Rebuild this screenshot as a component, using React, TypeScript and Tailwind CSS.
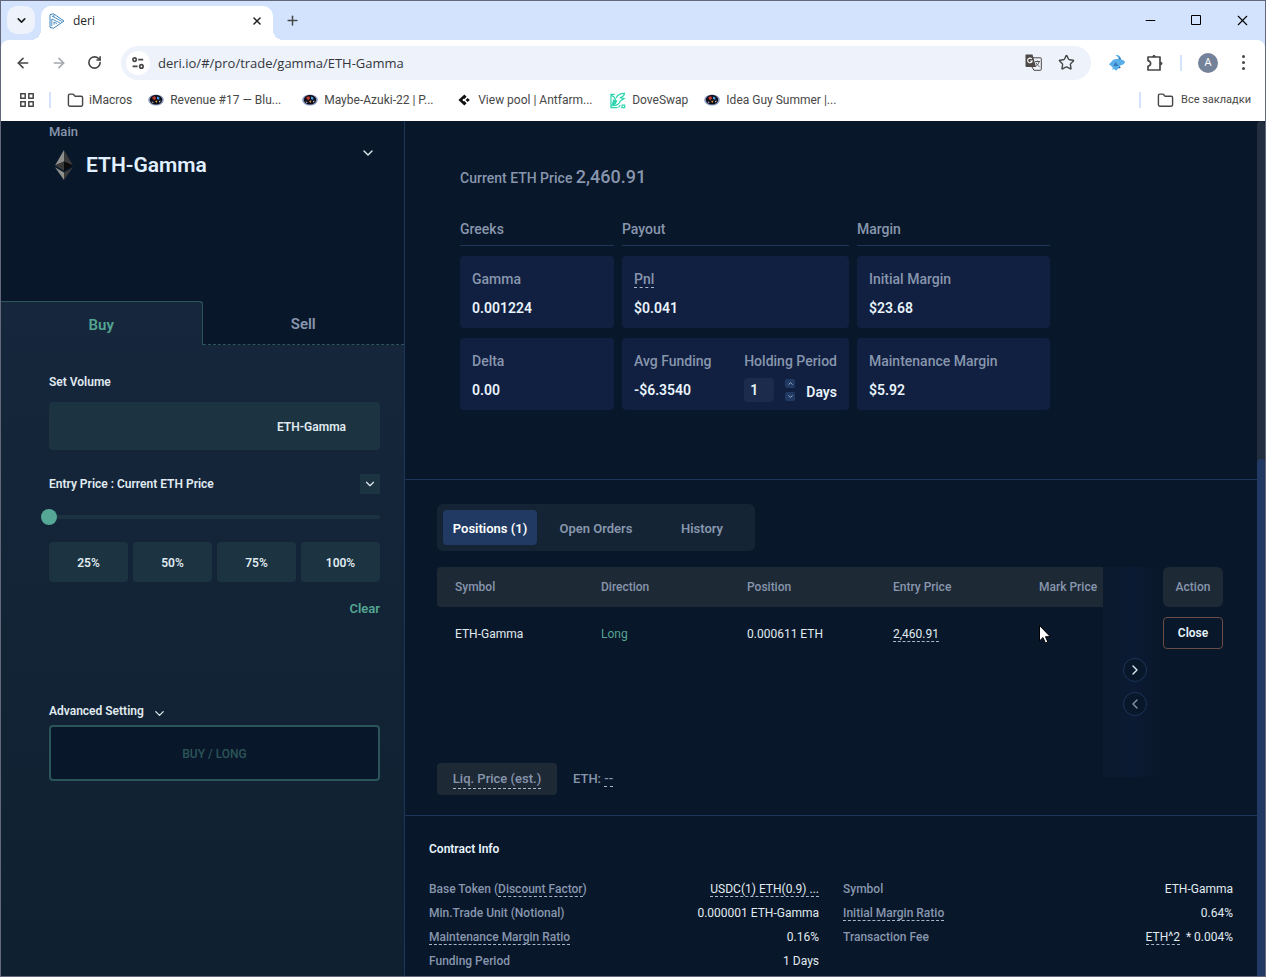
import React from 'react';
import { ArrowLeft, ArrowRight, ChevronDown, ChevronLeft, ChevronRight, ChevronUp, Folder, Minus, Plus, RotateCw, Star, X } from 'lucide-react';

const DeriLogo = () => (
  <svg width="16" height="16" viewBox="0 0 16 16" fill="none" stroke="#3f86bd" strokeLinejoin="round">
    <path d="M1 1.5 L4.5 0.8 L15 8 L4.5 15.2 L1 14.5 Z" />
    <path d="M2.8 3 L13 8.4 M2.8 13 V6 L10.8 9.8 M5 11.6 V9 L8 10.6" strokeWidth="0.9" />
    <path d="M4.6 1.5 L5 4" strokeWidth="0.9" />
  </svg>
);

const TuneIcon = () => (
  <svg width="14" height="14" viewBox="0 0 14 14" fill="none" stroke="#474747" strokeWidth="1.7">
    <circle cx="3.6" cy="3.6" r="1.7" />
    <path d="M7.2 3.6 H12.2 M1.6 10.4 H6.6" />
    <circle cx="10.4" cy="10.4" r="1.7" />
  </svg>
);

const AppsIcon = () => (
  <svg width="14" height="14" viewBox="0 0 14 14" fill="none" stroke="#474747" strokeWidth="1.5">
    <path d="M0.8 0.8h4.4v4.4h-4.4z M8.8 0.8h4.4v4.4h-4.4z M0.8 8.8h4.4v4.4h-4.4z M8.8 8.8h4.4v4.4h-4.4z" />
  </svg>
);

const FolderIcon = () => <Folder size={17} strokeWidth={2} className="-mr-px" />;

const PlanetIcon = () => (
  <svg width="16" height="12" viewBox="0 0 16 12">
    <ellipse cx="8" cy="6" rx="7.8" ry="5.6" fill="#8b9ac0" />
    <ellipse cx="8" cy="5.8" rx="6.2" ry="4.8" fill="#0c0d18" />
    <path d="M4 3.5 L7 2 L8.2 4.6 L6 6.5 Z" fill="#c0392f" />
    <path d="M9 2.6 L11.4 3.4 L11.2 5.8 L9 5 Z" fill="#4aa3e8" />
    <path d="M7 7 L9.5 6.5 L8.5 9 Z" fill="#e8a03c" />
    <path d="M3.6 7.5 L5.5 8 L5 9.2 Z M11 7 L12.8 6.5 L11.5 8.7 Z" fill="#d8e4f4" />
  </svg>
);

const AntfarmIcon = () => (
  <svg width="16" height="12" viewBox="-2 0 16 12" fill="#111">
    <path d="M6.4 0.6 L8.6 2.8 L6.4 5 L5 6 L6.4 7 L8.6 9.2 L6.4 11.4 L4.2 9.4 L0.4 6 L4.2 2.6 Z" />
    <path d="M9.6 4 L11.8 6 L9.6 8 L7.6 6 Z" />
    <circle cx="5.9" cy="6" r="1.3" fill="#fff" />
  </svg>
);

const DoveIcon = () => (
  <svg width="16" height="17" viewBox="0 0 17 17" fill="none" stroke="#2fd6b0" strokeWidth="1.3">
    <path d="M5 2 H1 V16 H8 M1.5 3 L4.5 5 L6 8 M6.5 6 C8 2 11 1 15.5 1 C15 4 13 5 10.5 5.5 L15 6.5 L11 9 C10 12 7 14 3 14" />
    <path d="M9 15.8 L11 13.6 M13 13.4 H15.6 V16 H12.6 Z" />
    <path d="M4 8 L7 9 L5.5 12 L2 14 Z" fill="#2fd6b0" />
  </svg>
);

const TranslateIcon = () => (
  <svg width="17" height="17" viewBox="0 0 17 17">
    <path d="M1 0.5 H7.5 L11 13 H1.8 Q0.5 13 0.5 11.8 V1 Z" fill="#4c4947" />
    <path d="M7.8 3.8 H15.6 Q16.3 3.8 16.3 4.5 V15.4 Q16.3 16.3 15.4 16.3 H9 L7 13" fill="none" stroke="#4c4947" />
    <path d="M6.8 5 A2.3 2.3 0 1 0 7.2 7 H5.2" fill="none" stroke="#fff" strokeWidth="1.1" />
    <path d="M10 7.5 H15 M12.4 6.5 V7.5 M14.2 7.5 C13.6 10 12 11.5 10.6 12.4 M11 8.6 C11.8 10.6 13 11.6 14.6 12.6" fill="none" stroke="#4c4947" strokeWidth="0.9" />
  </svg>
);

const FishIcon = () => (
  <svg width="18" height="18" viewBox="0 0 18 18">
    <path d="M7.4 1.2 C11 0.6 12.8 2.6 13 5.4 L15.5 6.2 L17.2 8.2 L15.2 10.4 L12.2 11.6 L12 13.8 L9.5 15 L8.4 16.8 L6 15 L4.4 16 L4.8 13.4 L1 10.2 L3.6 7.4 C5.5 5 8 4.6 10.6 5.2 C10.4 3.4 9.4 2.2 7.4 1.2 Z" fill="#58aee8" />
    <path d="M9.6 1.4 L12.8 5 L11.8 6 C11.6 4 11 2.8 9.6 1.4 Z M10.5 13 L13 13.2 L11.5 14.6 Z" fill="#1b4b97" />
    <path d="M5.5 12 L7.5 8 L10.5 12 Z" fill="#3577b8" />
  </svg>
);

const PuzzleIcon = () => (
  <svg width="18" height="18" viewBox="0 0 18 18" fill="none" stroke="#474747" strokeWidth="1.7" strokeLinejoin="round">
    <path d="M2 3 H14 V16 H2 V12.4 Q4.6 11.6 4.6 9.5 Q4.6 7.4 2 6.6 Z" />
    <path d="M6.6 2.6 Q6.8 1.4 8 1.4 Q9.2 1.4 9.4 2.6 Z M14.6 8 Q16 8.2 16 9.5 Q16 10.8 14.6 11 Z" fill="#474747" strokeWidth="1" />
  </svg>
);

const EthIcon = () => (
  <svg width="20" height="30" viewBox="0 0 20 30">
    <path d="M10 0 L1 15.5 L10 11.5 Z" fill="#8f8f8b" />
    <path d="M10 0 L19 15.5 L10 11.5 Z" fill="#3a3a3a" />
    <path d="M10 11.5 L1 15.5 L10 20.8 Z" fill="#3a3a3a" />
    <path d="M10 11.5 L19 15.5 L10 20.8 Z" fill="#0b0b0d" />
    <path d="M1 17.3 L10 30 V22.6 Z" fill="#8f8f8b" />
    <path d="M19 17.3 L10 30 V22.6 Z" fill="#3a3a3a" />
  </svg>
);

const CursorIcon = () => (
  <svg width="12" height="19" viewBox="0 0 12 19" className="absolute left-[18px] top-[18px]">
    <path d="M0.5 0.5 V16 L4 12.6 L6.4 18 L8.8 17 L6.5 11.7 H11.3 Z" fill="#fff" stroke="#000" />
  </svg>
);

const bookmarks = [
  { label: 'iMacros', icon: <FolderIcon /> },
  { label: 'Revenue #17 — Blu...', icon: <PlanetIcon />, cut: true },
  { label: 'Maybe-Azuki-22 | P...', icon: <PlanetIcon />, cut: true },
  { label: 'View pool | Antfarm...', icon: <AntfarmIcon />, cut: true },
  { label: 'DoveSwap', icon: <DoveIcon /> },
  { label: 'Idea Guy Summer |...', icon: <PlanetIcon />, cut: true },
];

const dashed = 'border-b border-dashed border-[#aab8c8]';

const BrowserBar: React.FC = () => (
  <header className="shrink-0 bg-[#d3e3fd] font-['Open_Sans',sans-serif] text-[#474747]">
    {/* Tab strip */}
    <div className="flex h-[39px] items-start">
      <button aria-label="Search tabs" className="mt-[5px] ml-1.5 flex size-7 items-center justify-center rounded-[10px] bg-[#edf2fb] text-[#1f1f1f]">
        <ChevronDown size={13} strokeWidth={3} />
      </button>
      <div className="relative mt-[5px] ml-1.5 flex h-[34px] w-[232px] items-center rounded-t-[10px] bg-white px-2 pb-1 text-xs text-[#1f1f1f]">
        <span className="absolute bottom-0 -left-2.5 size-2.5 bg-[radial-gradient(circle_at_0_0,transparent_10px,white_10px)]" />
        <span className="absolute -right-2.5 bottom-0 size-2.5 bg-[radial-gradient(circle_at_100%_0,transparent_10px,white_10px)]" />
        <DeriLogo />
        <span className="ml-2 flex-1">deri</span>
        <button aria-label="Close tab" className="flex size-4 items-center justify-center">
          <X size={12} strokeWidth={3} />
        </button>
      </div>
      <button aria-label="New tab" className="mt-3 ml-3 text-[#474747]">
        <Plus size={15} strokeWidth={2.4} />
      </button>
      <div className="ml-auto flex h-[38px] items-center text-black">
        <button aria-label="Minimize" className="flex w-[46px] justify-center"><Minus size={15} strokeWidth={1.6} /></button>
        <button aria-label="Maximize" className="flex w-[46px] justify-center">
          <svg width="10" height="10" viewBox="0 0 10 10" fill="none" stroke="currentColor"><path d="M0.5 0.5h9v9h-9z" /></svg>
        </button>
        <button aria-label="Close" className="flex w-[46px] justify-center"><X size={17} strokeWidth={1.6} /></button>
      </div>
    </div>

    {/* Address bar */}
    <div className="flex h-[45px] items-center rounded-t-lg bg-white pr-5 pl-3.5">
      <div className="flex w-[106px] gap-5">
        <button aria-label="Back"><ArrowLeft size={16} strokeWidth={2.4} /></button>
        <button aria-label="Forward" className="text-[#a3a8ae]"><ArrowRight size={16} strokeWidth={2.4} /></button>
        <button aria-label="Reload"><RotateCw size={15} strokeWidth={2.6} /></button>
      </div>
      <div className="flex h-[34px] flex-1 items-center rounded-full bg-[#edf2fb] pr-4 pl-[5px]">
        <span className="flex size-6 items-center justify-center rounded-full bg-white"><TuneIcon /></span>
        <input aria-label="Address" defaultValue="deri.io/#/pro/trade/gamma/ETH-Gamma" className="ml-2 min-w-0 flex-1 bg-transparent pt-0.5 text-[13px] text-[#33363b] outline-none" />
        <button aria-label="Translate"><TranslateIcon /></button>
        <button aria-label="Bookmark" className="ml-4"><Star size={17} strokeWidth={2} /></button>
      </div>
      <div className="ml-[17px] flex items-center">
        <FishIcon />
        <button aria-label="Extensions" className="ml-5"><PuzzleIcon /></button>
        <span className="mx-4 h-4 w-0.5 bg-[#d3e3fd]" />
        <span className="flex size-5 items-center justify-center rounded-full bg-[#748299] text-[11px] text-white">A</span>
        <button aria-label="Menu" className="ml-6 flex flex-col gap-[3px]">
          <i className="size-[3px] rounded-full bg-[#474747]" />
          <i className="size-[3px] rounded-full bg-[#474747]" />
          <i className="size-[3px] rounded-full bg-[#474747]" />
        </button>
      </div>
    </div>

    {/* Bookmarks */}
    <div className="flex h-9 items-center bg-white pr-3.5 pb-1.5 pl-[19px] font-['Roboto',sans-serif] text-xs">
      <AppsIcon />
      <span className="mr-4 ml-[15px] h-4 w-0.5 bg-[#d3e3fd]" />
      <nav className="flex items-center gap-4">
        {bookmarks.map((b) => (
          <a key={b.label} href="#" className="flex items-center gap-1.5 whitespace-nowrap">
            {b.icon}
            <span className={b.cut ? 'w-[116px]' : ''}>{b.label}</span>
          </a>
        ))}
      </nav>
      <span className="mr-4 ml-auto h-4 w-0.5 bg-[#d3e3fd]" />
      <a href="#" className="flex items-center gap-2 text-[11px] whitespace-nowrap">
        <FolderIcon />
        Все закладки
      </a>
    </div>
  </header>
);

const TradePanel: React.FC = () => (
  <aside className="flex w-[404px] shrink-0 flex-col border-r border-[#1c3558] text-[#e0ebf0]">
    <div className="flex h-[180px] justify-between pr-7 pl-12">
      <div>
        <p className="text-[13px] leading-[22px] font-medium text-[#8796ad]">Main</p>
        <div className="mt-1.5 flex items-center gap-3 pl-[5px]">
          <EthIcon />
          <h1 className="text-[21px] leading-8 font-semibold text-[#e0f0ff]">ETH-Gamma</h1>
        </div>
      </div>
      <button aria-label="Choose market" className="mt-6 h-4"><ChevronDown size={16} /></button>
    </div>

    {/* Buy / Sell */}
    <div className="flex flex-1 flex-col bg-linear-to-b from-[#16273d] to-[#0f2030]">
      <div className="grid h-11 grid-cols-2 text-[15px] font-semibold">
        <button className="rounded-tr border-t border-r border-[#2b5558] pt-1 text-[#53a592]">Buy</button>
        <button className="border-b border-dashed border-[#2b5558] bg-[#09172a] pt-1 text-[#8796ad]">Sell</button>
      </div>

      <div className="flex flex-col pr-6 pl-12 text-xs font-semibold">
        <label htmlFor="volume" className="mt-[26px] leading-[22px]">Set Volume</label>
        <div className="mt-[9px] flex h-12 items-center rounded-sm bg-[#1c3342] pt-0.5 pr-[34px] pl-4">
          <input id="volume" className="min-w-0 flex-1 bg-transparent outline-none" />
          <span>ETH-Gamma</span>
        </div>

        <div className="mt-[23px] flex h-[22px] items-center justify-between">
          <span>Entry Price : Current ETH Price</span>
          <button aria-label="Entry price type" className="flex size-5 items-center justify-center bg-[#1c3342]"><ChevronDown size={14} /></button>
        </div>

        <div className="mt-5 flex h-1 items-center rounded-full bg-[#1c3342]">
          <input
            type="range"
            aria-label="Volume share"
            defaultValue={0}
            className="-mx-2 h-4 w-[calc(100%+16px)] max-w-none shrink-0 appearance-none bg-transparent [&::-webkit-slider-thumb]:size-4 [&::-webkit-slider-thumb]:appearance-none [&::-webkit-slider-thumb]:rounded-full [&::-webkit-slider-thumb]:bg-[#55a896]"
          />
        </div>

        <div className="mt-[23px] grid grid-cols-4 gap-[5px]">
          {['25%', '50%', '75%', '100%'].map((p) => (
            <button key={p} className="h-10 rounded-sm bg-[#1c3342] pt-0.5">{p}</button>
          ))}
        </div>
        <button className="mt-4 self-end text-[13px] leading-[22px] text-[#53a592]">Clear</button>

        <button className="mt-20 flex items-center gap-2 self-start leading-[22px]">
          Advanced Setting
          <ChevronDown size={15} className="mt-1" />
        </button>
        <button disabled className="mt-[3px] h-14 rounded-sm border-2 border-[#2b5558] bg-[#09172a] pt-0.5 font-medium text-[#2b5558]">BUY / LONG</button>
      </div>
    </div>
  </aside>
);

const Stat: React.FC<{ label: string; value: string; underline?: boolean }> = ({ label, value, underline }) => (
  <div className="flex h-[72px] flex-col items-start gap-[7px] rounded-sm bg-[#111f40] px-3 pt-3 leading-[22px]">
    <span>{underline ? <span className={dashed}>{label}</span> : label}</span>
    <span className="font-semibold text-[#e8f4fc]">{value}</span>
  </div>
);

const Market: React.FC = () => (
  <section className="flex h-[359px] flex-col border-b border-[#1c3558] px-[55px] pt-[42px] text-sm font-medium text-[#8796ad]">
    <p className="leading-7">
      Current ETH Price <span className="text-lg">2,460.91</span>
    </p>
    <div className="mt-[26px] grid max-w-[590px] grid-cols-[154fr_227fr_193fr] gap-x-2 gap-y-2.5">
      <h2 className="border-b border-[#1c3558] pb-[5px] leading-[22px]">Greeks</h2>
      <h2 className="border-b border-[#1c3558] pb-[5px] leading-[22px]">Payout</h2>
      <h2 className="border-b border-[#1c3558] pb-[5px] leading-[22px]">Margin</h2>
      <Stat label="Gamma" value="0.001224" />
      <Stat label="Pnl" value="$0.041" underline />
      <Stat label="Initial Margin" value="$23.68" />
      <Stat label="Delta" value="0.00" />
      <div className="flex justify-between rounded-sm bg-[#111f40] px-3 pt-3 leading-[22px]">
        <div className="flex flex-col gap-[7px]">
          <span>Avg Funding</span>
          <span className="font-semibold text-[#e8f4fc]">-$6.3540</span>
        </div>
        <div className="flex flex-col gap-[5px]">
          <label htmlFor="holding">Holding Period</label>
          <div className="flex items-center justify-between font-semibold text-[#e8f4fc]">
            <input id="holding" defaultValue="1" className="h-6 w-[30px] rounded-sm bg-[#1c2b4b] pl-1.5 outline-none" />
            <div className="flex flex-col gap-1">
              <button aria-label="More days" className="flex h-[9px] w-2.5 items-center justify-center rounded-xs bg-[#203a63]"><ChevronUp size={7} /></button>
              <button aria-label="Fewer days" className="flex h-[9px] w-2.5 items-center justify-center rounded-xs bg-[#203a63]"><ChevronDown size={7} /></button>
            </div>
            <span className="pt-1">Days</span>
          </div>
        </div>
      </div>
      <Stat label="Maintenance Margin" value="$5.92" />
    </div>
  </section>
);

const Positions: React.FC = () => (
  <section className="flex h-[336px] flex-col border-b border-[#1c3558] pt-6 pr-[34px] pl-8 text-[13px] font-medium text-[#8796ad]">
    <div className="flex w-[318px] rounded-md bg-[#142434] p-1.5 font-semibold">
      <button className="h-[35px] w-[94px] rounded-sm bg-[#203a63] pt-0.5 whitespace-nowrap text-white">Positions (1)</button>
      <button className="h-[35px] flex-1 pt-0.5 pl-0.5">Open Orders</button>
      <button className="h-[35px] w-24 pt-0.5 pl-0.5">History</button>
    </div>

    <div className="mt-4 flex h-[210px] shrink-0 text-xs">
      <div className="min-w-0 flex-1 overflow-hidden">
        <table className="w-[730px] table-fixed text-left">
          <thead>
            <tr className="h-10 bg-[#1e2936]">
              <th className="rounded-l-sm pl-[18px] font-medium">Symbol</th>
              <th className="pl-[18px] font-medium">Direction</th>
              <th className="pl-[18px] font-medium">Position</th>
              <th className="pl-[18px] font-medium">Entry Price</th>
              <th className="pl-[18px] font-medium">Mark Price</th>
            </tr>
          </thead>
          <tbody>
            <tr className="h-[54px] font-normal text-[#e0ebf0]">
              <td className="pl-[18px]">ETH-Gamma</td>
              <td className="pl-[18px] text-[#53a592]">Long</td>
              <td className="pl-[18px]">0.000611 ETH</td>
              <td className="pl-[18px]"><span className={dashed}>2,460.91</span></td>
              <td className="relative"><CursorIcon /></td>
            </tr>
          </tbody>
        </table>
      </div>
      <div className="flex w-[60px] flex-col items-center gap-2.5 bg-linear-to-r from-[#0b1a2d] via-[#0b1a33] to-[#09172a] pt-[91px] pl-1">
        <button aria-label="Scroll right" className="flex size-6 items-center justify-center rounded-full border border-[#1c3558] bg-[#09172a] text-[#e0ebf0]"><ChevronRight size={16} /></button>
        <button aria-label="Scroll left" className="flex size-6 items-center justify-center rounded-full border border-[#1c3558] bg-[#09172a]"><ChevronLeft size={16} /></button>
      </div>
      <div className="w-[60px]">
        <div className="flex h-10 items-center justify-center rounded-md bg-[#1e2936]">Action</div>
        <button className="mt-2.5 h-8 w-full rounded-sm border border-[#6b4c44] font-semibold text-[#e8f4fc]">Close</button>
      </div>
    </div>

    <div className="-mt-3.5 flex h-8 items-center gap-4">
      <span className="flex h-8 w-[120px] items-center justify-center rounded-sm bg-[#1e2936]"><span className="border-b border-dashed border-[#aab8c8] leading-[18px]">Liq. Price (est.)</span></span>
      <span>ETH: <span className={dashed}>--</span></span>
    </div>
  </section>
);

const InfoRow: React.FC<{ label: React.ReactNode; value: React.ReactNode }> = ({ label, value }) => (
  <div className="flex h-6 items-center justify-between">
    <dt className="font-medium text-[#8796ad]">{label}</dt>
    <dd className="text-[#e0ebf0]">{value}</dd>
  </div>
);

const ContractInfo: React.FC = () => (
  <section className="px-6 pt-[22px] text-xs">
    <h2 className="leading-[22px] font-semibold text-[#e8f4fc]">Contract Info</h2>
    <div className="mt-[17px] grid grid-cols-2 gap-6">
      <dl>
        <InfoRow label={<>Base Token (<span className={dashed}>Discount Factor</span>)</>} value={<span className={dashed}>USDC(1) ETH(0.9) ...</span>} />
        <InfoRow label="Min.Trade Unit (Notional)" value="0.000001 ETH-Gamma" />
        <InfoRow label={<span className={dashed}>Maintenance Margin Ratio</span>} value="0.16%" />
        <InfoRow label="Funding Period" value="1 Days" />
      </dl>
      <dl>
        <InfoRow label="Symbol" value="ETH-Gamma" />
        <InfoRow label={<span className={dashed}>Initial Margin Ratio</span>} value="0.64%" />
        <InfoRow label="Transaction Fee" value={<><span className={dashed}>ETH^2</span> &nbsp;* 0.004%</>} />
      </dl>
    </div>
  </section>
);

const App: React.FC = () => (
  <div className="flex h-screen flex-col overflow-hidden border border-[#63687a] bg-[#09172a] font-['Roboto',sans-serif]">
    <BrowserBar />
    <div className="flex min-h-0 flex-1">
      <TradePanel />
      <main className="min-w-0 flex-1 overflow-hidden">
        <Market />
        <Positions />
        <ContractInfo />
      </main>
      {/* Scrollbar */}
      <div className="flex w-2 flex-col rounded-t bg-[#232e3e] pt-[338px]">
        <div className="flex-1 rounded-t bg-[#203a63]" />
      </div>
    </div>
  </div>
);

export default App;
